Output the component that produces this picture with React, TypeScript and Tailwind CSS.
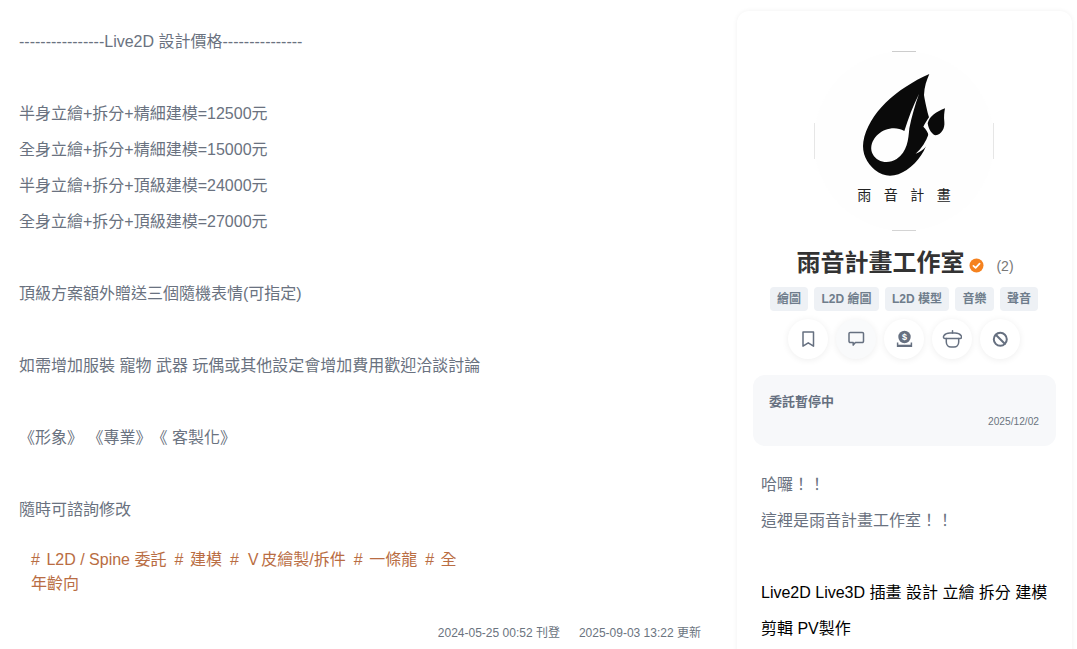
import React from "react";

const FONT = '"Liberation Sans","Noto Sans CJK TC",sans-serif';

const leftLines = [
  "----------------Live2D 設計價格---------------",
  "",
  "半身立繪+拆分+精細建模=12500元",
  "全身立繪+拆分+精細建模=15000元",
  "半身立繪+拆分+頂級建模=24000元",
  "全身立繪+拆分+頂級建模=27000元",
  "",
  "頂級方案額外贈送三個隨機表情(可指定)",
  "",
  "如需增加服裝 寵物 武器 玩偶或其他設定會增加費用歡迎洽談討論",
  "",
  "《形象》 《專業》《 客製化》",
  "",
  "隨時可諮詢修改",
];

const cats = ["繪圖", "L2D 繪圖", "L2D 模型", "音樂", "聲音"];
const hashtags = ["L2D / Spine 委託", "建模", "Ｖ皮繪製/拆件", "一條龍"];

function Logo() {
  return (
    <div className="relative w-[180px] h-[180px] rounded-full bg-[#fefefe]">
      <div className="absolute top-0 left-[78px] w-6 h-px bg-[#cccccc]" />
      <div className="absolute bottom-0 left-[78px] w-6 h-px bg-[#d4d4d4]" />
      <div className="absolute left-0 top-[72px] h-9 w-px bg-[#e6e6e6]" />
      <div className="absolute right-0 top-[72px] h-9 w-px bg-[#e6e6e6]" />
      <svg viewBox="72 63 540 540" className="absolute inset-0 w-full h-full">
        <path
          fillRule="evenodd"
          fill="#0a0a0a"
          d="M418 132 C410 150 403 170 402 195 C405 215 412 245 417 262 C410 272 404 282 400 290 C408 298 414 306 416 318 C410 360 385 395 350 420 C320 440 285 445 255 420 C230 398 215 370 220 335 C235 250 320 175 418 132 Z M387 192 C375 225 365 260 358 295 C355 330 352 365 320 387 C295 403 262 398 248 372 C235 345 255 312 285 300 C305 293 325 293 343 303 C355 265 370 225 387 192 Z"
        />
        <path fill="#fefefe" d="M416 312 C408 335 395 355 377 371 C400 362 416 345 425 320 Z" />
        <path
          fill="#0a0a0a"
          d="M465 235 C440 245 418 258 413 280 C416 300 428 315 437 316 C455 312 465 295 463 275 C461 260 463 247 465 235 Z"
        />
      </svg>
      <div
        className="absolute left-0 right-0 top-[135px] flex justify-center gap-[12.5px] text-sm leading-4 text-[#222222]"
        style={{ fontFamily: '"Noto Sans CJK TC",serif' }}
      >
        <span>雨</span>
        <span>音</span>
        <span>計</span>
        <span>畫</span>
      </div>
    </div>
  );
}

function IconBtn({ children, tint }: { children: React.ReactNode; tint?: boolean }) {
  return (
    <div
      className={`w-10 h-10 rounded-full flex items-center justify-center shadow-[0_1px_7px_rgba(0,0,0,0.07)] ${
        tint ? "bg-[#f9fafb]" : "bg-white"
      }`}
    >
      {children}
    </div>
  );
}

const S = {
  width: 20,
  height: 20,
  viewBox: "0 0 20 20",
  fill: "none",
  stroke: "#667080",
  strokeWidth: 1.5,
  strokeLinejoin: "round" as const,
  strokeLinecap: "round" as const,
};

export default function App() {
  return (
    <div
      className="w-[1077px] h-[649px] overflow-hidden bg-white flex items-start"
      style={{ fontFamily: FONT }}
    >
      <main className="w-[737px] shrink-0 pl-[19px] pr-9 pt-6 text-[#6a7280] [text-spacing-trim:space-all]">
        <div className="text-base leading-9">
          {leftLines.map((l, i) => (
            <div key={i} className="h-9 whitespace-nowrap">
              {l}
            </div>
          ))}
        </div>
        <div className="mt-5 ml-3 w-[432px] text-base leading-6 text-[#b96d43]">
          {hashtags.map((t) => (
            <React.Fragment key={t}>
              <span className="mr-[6.5px]">#</span>
              <span className="mr-2">{t}</span>
            </React.Fragment>
          ))}
          <span className="mr-[6.5px]">#</span>
          <span>全</span>
          <br />
          <span>年齡向</span>
        </div>
        <div className="mt-[28px] flex justify-end gap-[19px] text-xs leading-[18px] text-[#6b7480]">
          <span>2024-05-25 00:52 刊登</span>
          <span>2025-09-03 13:22 更新</span>
        </div>
      </main>

      <aside className="w-[335px] shrink-0 mt-[11px] rounded-xl bg-white shadow-[0_0_5px_rgba(0,0,0,0.06)] pl-4 pr-[17px] pt-10 h-[700px]">
        <div className="flex flex-col items-center">
          <Logo />
          <div className="mt-4 flex items-center h-8 pl-[2px]">
            <h1 className="text-2xl leading-8 font-bold text-[#333333]">雨音計畫工作室</h1>
            <svg className="ml-[5px] mt-[5px]" width="15" height="15" viewBox="0 0 15 15">
              <circle cx="7.5" cy="7.5" r="7" fill="#f5821f" />
              <path d="M4.4 7.8 6.6 9.9 10.6 5.6" fill="none" stroke="#fff" strokeWidth="1.7" strokeLinecap="round" strokeLinejoin="round" />
            </svg>
            <span className="ml-3 mt-[6px] text-sm text-[#777777]">(2)</span>
          </div>
          <div className="mt-2 flex gap-[6px]">
            {cats.map((c) => (
              <span
                key={c}
                className="h-6 px-[7.25px] rounded-[4px] bg-[#eef1f5] text-xs leading-6 font-bold text-[#6f7d8c]"
              >
                {c}
              </span>
            ))}
          </div>
          <div className="mt-2 flex gap-2">
            <IconBtn>
              <svg {...S}>
                <path d="M5 3h10.5v14.2l-5.25-3.4L5 17.2z" />
              </svg>
            </IconBtn>
            <IconBtn tint>
              <svg {...S}>
                <path d="M4.2 3.4h12.1a1.2 1.2 0 0 1 1.2 1.2v7.7a1.2 1.2 0 0 1-1.2 1.2H9.4l-2.2 2.6v-2.6h-3A1.2 1.2 0 0 1 3 12.3V4.6a1.2 1.2 0 0 1 1.2-1.2z" />
              </svg>
            </IconBtn>
            <IconBtn>
              <svg width="20" height="20" viewBox="0 0 20 20">
                <circle cx="10.5" cy="8" r="6.2" fill="#667080" />
                <text x="10.5" y="11.2" textAnchor="middle" fontSize="9" fontWeight="700" fill="#fff" fontFamily="Liberation Sans">$</text>
                <path d="M3.6 13.5v3.7h13.8v-3.7" fill="none" stroke="#667080" strokeWidth="1.5" />
                <path d="M3.6 16.6h13.8" stroke="#667080" strokeWidth="1.8" />
              </svg>
            </IconBtn>
            <IconBtn>
              <svg {...S}>
                <path d="M10.5 1.8V4" />
                <path d="M2.8 9.5C1.2 9.5 1.2 7.5 2 6.5 3.5 4.5 6 4 8 4h5c2 0 4.5.5 6 2.5.8 1 .8 3-.8 3z" />
                <path d="M4.3 9.5V13c0 3 2.2 5 4.7 5h3c2.5 0 4.7-2 4.7-5V9.5" />
              </svg>
            </IconBtn>
            <IconBtn>
              <svg {...S} strokeWidth={2}>
                <circle cx="10.3" cy="10.3" r="6.5" />
                <path d="M5.8 5.8l9 9" />
              </svg>
            </IconBtn>
          </div>
          <section className="mt-4 w-[303px] h-[71px] shrink-0 rounded-xl bg-[#f7f8fa] pl-4 pr-[17px] pt-[18px] self-start">
            <div className="text-[13px] leading-[18px] font-bold text-[#667080]">委託暫停中</div>
            <div className="mt-1 text-[10.2px] leading-[14px] text-right text-[#6b7480]">2025/12/02</div>
          </section>
        </div>
        <div className="mt-[21px] pl-2 text-base leading-9">
          <div className="text-[#6a7280]">哈囉！！</div>
          <div className="text-[#6a7280]">這裡是雨音計畫工作室！！</div>
          <div className="h-9" />
          <div className="text-black w-[300px]">Live2D Live3D 插畫 設計 立繪 拆分 建模 剪輯 PV製作</div>
        </div>
      </aside>
    </div>
  );
}
